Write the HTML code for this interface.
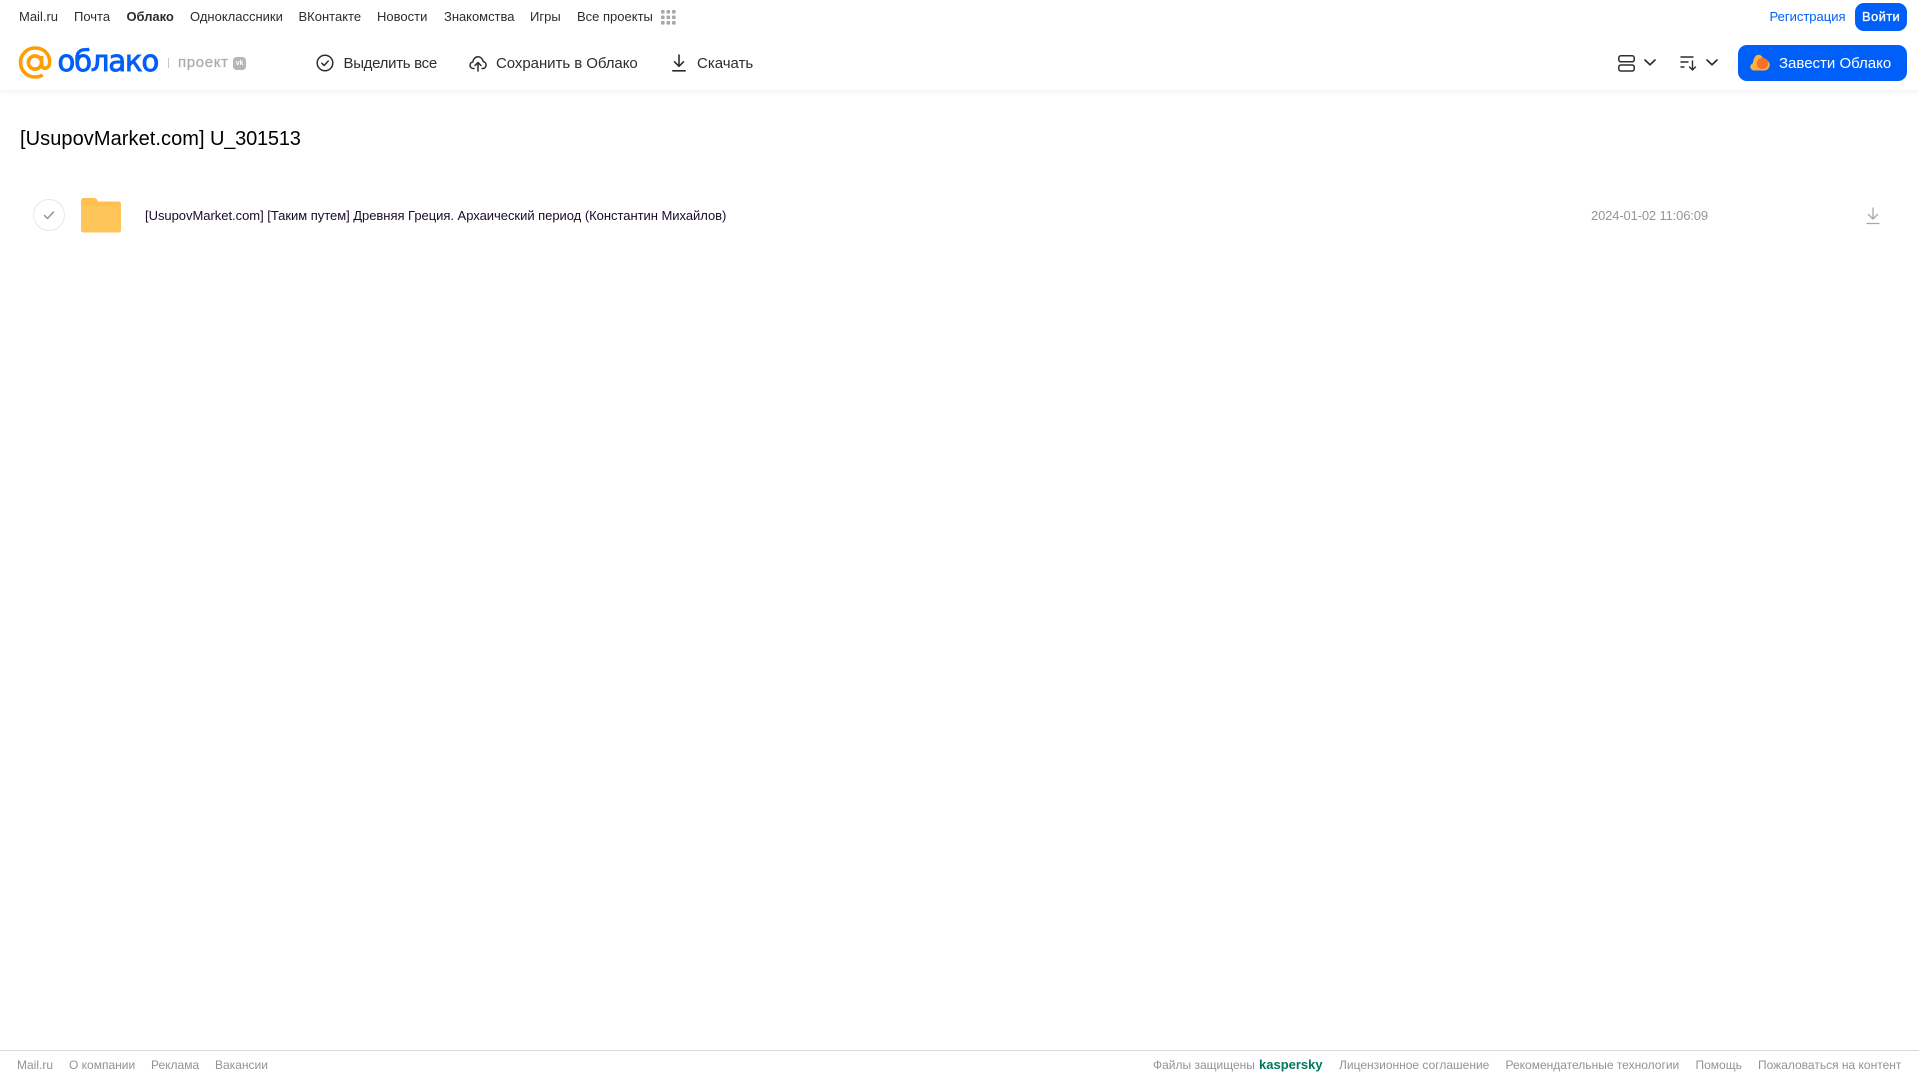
<!DOCTYPE html>
<html lang="ru"><head><meta charset="utf-8"><title>Облако</title>
<style>
html,body{margin:0;padding:0;width:1919px;height:1079px;overflow:hidden;background:#fff;font-family:"Liberation Sans",Arial,sans-serif}
.t{position:absolute;white-space:nowrap;line-height:16px;transform:translateY(-50%)}
.n{font-size:13px;color:#2c2d2e;top:16.5px}
.a{font-size:15px;color:#2c2d2e;top:63.5px}
.f{font-size:12px;color:#919399;top:1065px}
svg{position:absolute;display:block}
#hd{position:absolute;left:0;top:0;width:1919px;height:90px;background:#fff;box-shadow:0 1px 6px rgba(0,0,0,.07)}
.btn{position:absolute;background:#005ff9;border-radius:9px}
</style></head><body>
<div id="hd"></div>
<span class="t n" style="left:19px">Mail.ru</span>
<span class="t n" style="left:74px">Почта</span>
<span class="t n" style="left:126.5px;font-weight:bold;letter-spacing:-.05px">Облако</span>
<span class="t n" style="left:190px">Одноклассники</span>
<span class="t n" style="left:298.5px">ВКонтакте</span>
<span class="t n" style="left:377px">Новости</span>
<span class="t n" style="left:444px;letter-spacing:-.03px">Знакомства</span>
<span class="t n" style="left:530px">Игры</span>
<span class="t n" style="left:577px">Все проекты</span>
<svg style="left:661px;top:10px" width="15" height="15" fill="#a5a7ab"><rect x="0" y="0" width="3.6" height="3.6" rx="1"/><rect x="5.5" y="0" width="3.6" height="3.6" rx="1"/><rect x="11" y="0" width="3.6" height="3.6" rx="1"/><rect x="0" y="5.5" width="3.6" height="3.6" rx="1"/><rect x="5.5" y="5.5" width="3.6" height="3.6" rx="1"/><rect x="11" y="5.5" width="3.6" height="3.6" rx="1"/><rect x="0" y="11" width="3.6" height="3.6" rx="1"/><rect x="5.5" y="11" width="3.6" height="3.6" rx="1"/><rect x="11" y="11" width="3.6" height="3.6" rx="1"/></svg>

<svg style="left:18px;top:46px" width="34" height="34" viewBox="0 0 34 34" fill="none" stroke="#ff9e00" stroke-width="3.6"><circle cx="17" cy="16.5" r="6.6"/><path d="M23.6 10v8.5c0 5.5 7.6 5 8-1.5.6-9-6-15-14.600-15C9 2 2.500 8.500 2.500 16.500S9 31 17 31c3 0 5.500-.7 7.600-2"/></svg>
<span class="t" style="left:57.5px;top:61px;font-size:29px;line-height:36px;color:#005ff9;font-family:'DejaVu Sans',sans-serif;-webkit-text-stroke:.9px #005ff9;letter-spacing:-1.1px">облако</span>
<div style="position:absolute;left:168px;top:58px;width:1px;height:10px;background:#c5c7cb"></div>
<span class="t" style="left:178px;top:62.500px;font-size:15px;color:#a9abb0;letter-spacing:.65px;-webkit-text-stroke:.25px #a9abb0">проект</span>
<div style="position:absolute;left:233px;top:57px;width:13px;height:13px;border-radius:3.500px;background:#b4b6ba;color:#fff;font-size:7px;line-height:13px;text-align:center;font-weight:bold">vk</div>

<svg style="left:316px;top:54px" width="18" height="18" viewBox="0 0 18 18" fill="none" stroke="#2c2d2e" stroke-width="1.500"><circle cx="9" cy="9" r="7.800"/><path d="M5.800 9.200l2.300 2.300 4.200-4.500" stroke-linecap="round" stroke-linejoin="round"/></svg>
<span class="t a" style="left:343.5px;letter-spacing:-.3px">Выделить все</span>
<svg style="left:469px;top:54px" width="18" height="18" viewBox="0 0 18 18" fill="none" stroke="#2c2d2e" stroke-width="1.500" stroke-linecap="round" stroke-linejoin="round"><path d="M5 14.500H4.300C2.400 14.500 1 13 1 11.200c0-1.700 1.200-3 2.800-3.200C4.200 5 6.300 2.800 9 2.800c2.600 0 4.700 2 5.100 4.700 1.700.3 3 1.800 3 3.600 0 1.800-1.400 3.400-3.300 3.400H13"/><path d="M9 17V9M6 11.500L9 8.500l3 3"/></svg>
<span class="t a" style="left:496px;letter-spacing:-.05px">Сохранить в Облако</span>
<svg style="left:671px;top:54px" width="16" height="18" viewBox="0 0 16 18" fill="none" stroke="#2c2d2e" stroke-width="1.600" stroke-linecap="round" stroke-linejoin="round"><path d="M8 1v11M3.500 7.800L8 12.300l4.500-4.500M1.800 16.800h12.400"/></svg>
<span class="t a" style="left:697px">Скачать</span>

<svg style="left:1618px;top:55px" width="17" height="17" viewBox="0 0 17 17" fill="none" stroke="#2c2d2e" stroke-width="1.500"><rect x=".8" y=".8" width="15.400" height="6" rx="2"/><rect x=".8" y="10" width="15.400" height="6" rx="2"/></svg>
<svg style="left:1643px;top:58px" width="14" height="9" viewBox="0 0 14 9" fill="none" stroke="#2c2d2e" stroke-width="1.700" stroke-linecap="round" stroke-linejoin="round"><path d="M2 2l5 4.800L12 2"/></svg>
<svg style="left:1680px;top:55px" width="18" height="16" viewBox="0 0 18 16" fill="none" stroke="#2c2d2e" stroke-width="1.400" stroke-linecap="round" stroke-linejoin="round"><path d="M1 2h12M1 7h7M1 12h3M12.500 6v9M9.500 12l3 3 3-3"/></svg>
<svg style="left:1705px;top:58px" width="14" height="9" viewBox="0 0 14 9" fill="none" stroke="#2c2d2e" stroke-width="1.700" stroke-linecap="round" stroke-linejoin="round"><path d="M2 2l5 4.800L12 2"/></svg>

<span class="t n" style="left:1769.5px;color:#005ff9">Регистрация</span>
<div class="btn" style="left:1855px;top:3px;width:52px;height:28px"></div>
<span class="t n" style="left:1862px;color:#fff;-webkit-text-stroke:.3px #fff;letter-spacing:.35px">Войти</span>
<div class="btn" style="left:1738px;top:45px;width:169px;height:36px"></div>
<svg style="left:1750px;top:54px" width="20" height="17" viewBox="0 0 20 17"><path d="M4 16.500C1.800 16.500 .3 14.800.3 12.800c0-1.800 1-3.100 2.600-3.600C3.200 5.500 5 .8 8.500 .8c2.600 0 4.200 2.200 4.800 4.200 3.500 0 6.400 2.900 6.400 6 0 3-2.500 5.500-5.500 5.500z" fill="#ffb03a"/><circle cx="12.500" cy="9.500" r="5.600" fill="#f5702a"/></svg>
<span class="t a" style="left:1779px;color:#fff">Завести Облако</span>

<span class="t" style="left:20px;top:138.5px;font-size:20px;line-height:24px;color:#000;letter-spacing:.07px">[UsupovMarket.com]</span>
<span class="t" style="left:210px;top:138.5px;font-size:20px;line-height:24px;color:#000;letter-spacing:-.2px">U_301513</span>

<svg style="left:33px;top:199px" width="32" height="32" viewBox="0 0 32 32" fill="none"><circle cx="16" cy="16" r="15.500" stroke="#e7e8ea"/><path d="M11.500 16.500l3 3 6-6.500" stroke="#919399" stroke-width="1.500" stroke-linecap="round" stroke-linejoin="round"/></svg>
<svg style="left:81px;top:198px" width="40" height="35" viewBox="0 0 40 35"><path d="M2.500 0h10c2.500 0 3.500 1 4.500 3.500h20.500A2.500 2.500 0 0 1 40 6V32a2.500 2.500 0 0 1-2.500 2.500h-35A2.500 2.500 0 0 1 0 32V2.500A2.500 2.500 0 0 1 2.500 0z" fill="#ffc04d"/><path d="M0 8h40v24a2.500 2.500 0 0 1-2.500 2.500h-35A2.500 2.500 0 0 1 0 32z" fill="#ffc558"/></svg>
<span class="t" style="left:145px;top:215.500px;font-size:13px;color:#1a0a2a;letter-spacing:-.03px">[UsupovMarket.com] [Таким путем] Древняя Греция. Архаический период (Константин Михайлов)</span>
<span class="t" style="left:1591px;top:215.500px;font-size:13px;color:#959698;letter-spacing:-.15px">2024-01-02 11:06:09</span>
<svg style="left:1866px;top:206px" width="14" height="19" viewBox="0 0 14 19" fill="none" stroke="#a5a7ab" stroke-width="1.300" stroke-linecap="round" stroke-linejoin="round"><path d="M7 2v11M2.500 8.500L7 13l4.500-4.500M1 17.500h12"/></svg>

<div style="position:absolute;left:0;top:1050px;width:1919px;height:1px;background:#d8d9db"></div>
<span class="t f" style="left:17px">Mail.ru</span>
<span class="t f" style="left:69px">О компании</span>
<span class="t f" style="left:151px">Реклама</span>
<span class="t f" style="left:215px">Вакансии</span>
<span class="t f" style="left:1153px">Файлы защищены</span>
<span class="t f" style="left:1259px;color:#00795f;font-weight:bold;font-size:13px">kaspersky</span>
<span class="t f" style="left:1339px">Лицензионное соглашение</span>
<span class="t f" style="left:1505.500px">Рекомендательные технологии</span>
<span class="t f" style="left:1695.500px">Помощь</span>
<span class="t f" style="left:1758px">Пожаловаться на контент</span>
</body></html>
